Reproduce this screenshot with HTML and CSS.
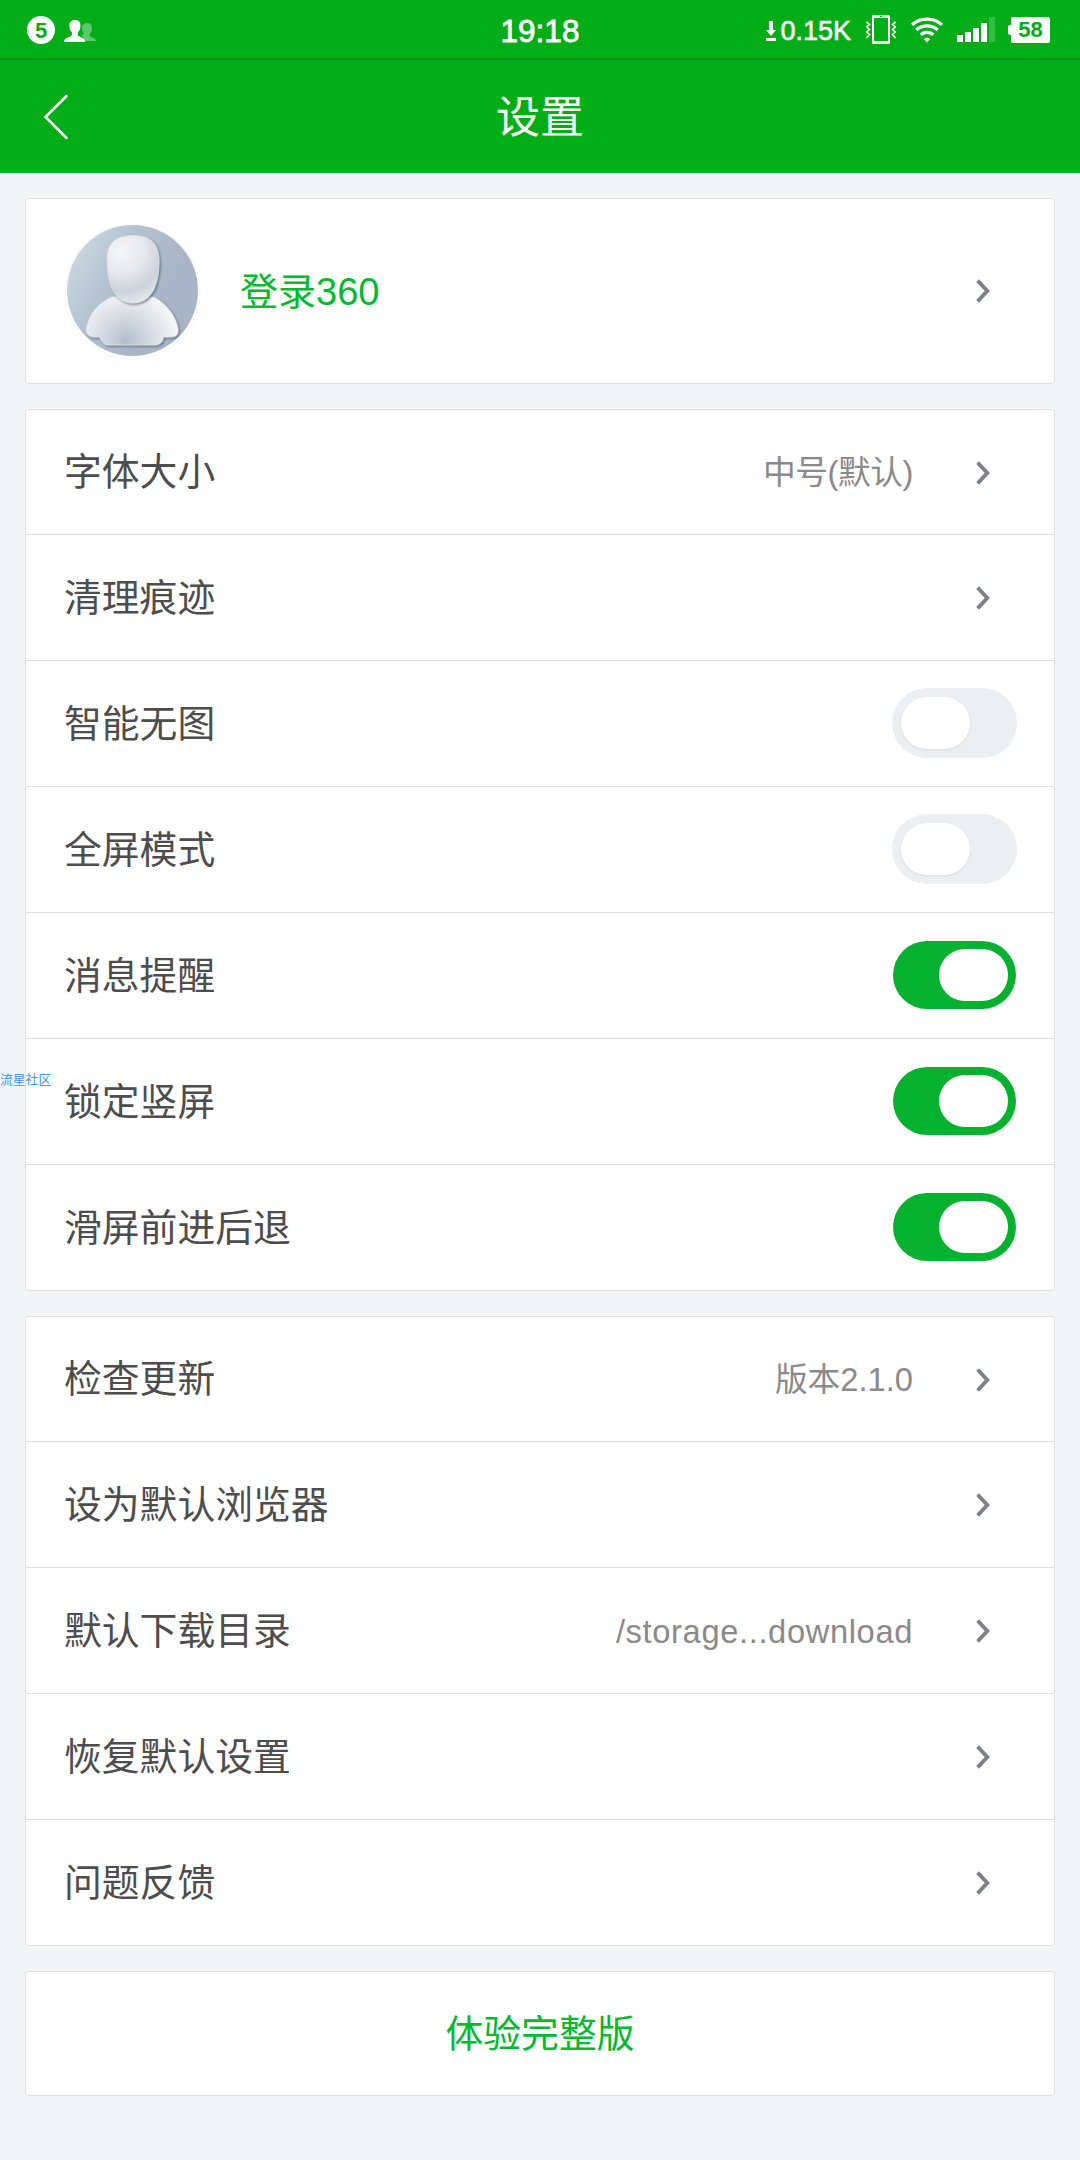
FILE: index.html
```html
<!DOCTYPE html>
<html lang="zh-CN">
<head>
<meta charset="utf-8">
<title>设置</title>
<link rel="stylesheet" href="styles.css">
</head>
<body>
<svg class="defs" width="0" height="0">
  <symbol id="chevron" viewBox="0 0 16 26"><path d="M2.600 2.600 12.300 13 2.600 23.400"/></symbol>
</svg>
<div class="statusbar">
  <div class="status-left">
    <span class="count">5</span>
    <svg class="people" width="33" height="24" viewBox="0 0 33 24" fill="#fff">
      <path opacity=".35" d="M23 3c3.400 0 5 2 5 5 0 2.500-.8 4.500-2.200 6v2c1.500 2 6.200 1.500 6.200 5H22l-2-3-2-2 2-3c-1.500-1-2-3-2-5 0-3 1.600-5 5-5z"/>
      <path d="M11 0c4 0 5.700 2.500 5.500 6-.1 2.800-1 5-2.700 6.500V15c1.500 2.800 7.700 2 7.700 7H0c0-5 6.200-4.200 7.900-7v-2.500C6.300 11 5.500 8.800 5.400 6 5.200 2.500 7 0 11 0z"/>
    </svg>
  </div>
  <div class="clock">19:18</div>
  <div class="status-right">
    <svg class="down" width="10" height="20" viewBox="0 0 10 20" fill="#fff"><path d="M3 0h4v9h3l-5 6-5-6h3zM0 17h10v3H0z"/></svg>
    <span class="speed">0.15K</span>
    <svg class="vibrate" width="30" height="30" viewBox="0 0 30 30" fill="none" stroke="#fff">
      <path stroke-width="2" d="M7 1v27M23 1v27"/><path stroke-width="3" d="M6.500 1.500h17M6.500 27.500h17"/>
      <path stroke="#02ad18" d="M14 1.500h2"/>
      <path stroke-width="1.700" d="M.5 7 3.500 9.500.8 12l2.700 2.500L.8 17l2.700 2.500L.5 23M29.500 7l-3 2.500 2.700 2.500-2.700 2.500 2.700 2.500-2.700 2.500 3 3.500"/>
    </svg>
    <svg class="wifi" width="32" height="26" viewBox="0 0 32 26" fill="none" stroke="#fff" stroke-width="3.300">
      <path d="M1 7.800C9 .2 23 .2 31 7.800"/><path d="M5.300 13c5.500-5.400 15.900-5.400 21.400 0"/><path d="M9.800 17.800c3.200-3.300 9.200-3.300 12.400 0"/>
      <path fill="#fff" stroke="none" d="M12.800 22c1.800-1.800 4.600-1.800 6.400 0L16 25.500z"/>
    </svg>
    <svg class="signal" width="38" height="25" viewBox="0 0 38 25" fill="#fff"><path d="M0 18h6v7H0zM8 15h6v10H8zM16 11h6v14h-6zM24 6h6v19h-6z"/><path opacity=".2" d="M32 0h6v25h-6z"/></svg>
    <span class="battery">58</span>
  </div>
</div>
<header class="titlebar">
  <svg class="back" width="26" height="46" viewBox="0 0 26 46"><path d="M23.500 2 2.500 23l21 21"/></svg>
  <h1>设置</h1>
</header>
<main>
  <section class="card">
    <div class="row account">
      <svg class="avatar" width="137" height="137" viewBox="0 0 137 137">
        <defs>
          <linearGradient id="bg" x1="0" y1=".1" x2=".75" y2=".5"><stop stop-color="#d0dee6"/><stop offset=".5" stop-color="#b5c3d1"/><stop offset="1" stop-color="#a9b5c6"/></linearGradient>
          <radialGradient id="head" gradientUnits="userSpaceOnUse" cx="58" cy="28" r="56"><stop stop-color="#f5f5f6"/><stop offset=".4" stop-color="#e6e9ed"/><stop offset=".72" stop-color="#ccd2da"/><stop offset="1" stop-color="#e9edf2"/></radialGradient>
          <radialGradient id="body" gradientUnits="userSpaceOnUse" cx="62" cy="118" r="52"><stop stop-color="#b3bdca"/><stop offset=".45" stop-color="#d3d9e0"/><stop offset="1" stop-color="#f5f7f9"/></radialGradient>
          <filter id="soft" x="-20%" y="-20%" width="140%" height="140%"><feDropShadow dx="1.300" dy="1.300" stdDeviation="1" flood-color="#43546a" flood-opacity=".7"/></filter>
          <clipPath id="disc"><circle cx="68.500" cy="67.500" r="65.500"/></clipPath>
        </defs>
        <circle cx="68.500" cy="69" r="67.500" fill="#fff" stroke="#f6f6f7"/>
        <g clip-path="url(#disc)">
          <path fill="url(#bg)" d="M0 0h137v137H0z"/>
          <path filter="url(#soft)" fill="url(#body)" stroke="#dce7ee" stroke-width=".8" d="M48 74C34 80 25 91 22.500 105c-.8 5 2 8.500 7 9h5c3 .5 3 8 10 8h45c6 0 9-2 10-8h8c5 0 7-3 6.500-8C112 94 104 82 90 74z"/>
          <path filter="url(#soft)" fill="url(#head)" stroke="#d5e1e9" stroke-width=".8" d="M69 12.500c-17 0-26 7-26 24C43 61 50 80 69 80c18 0 26-17 26-42 0-18-9-25.500-26-25.500z"/>
        </g>
      </svg>
      <span class="login">登录360</span><svg class="chev"><use href="#chevron"/></svg>
    </div>
  </section>
  <section class="card">
    <div class="row"><span class="label">字体大小</span><span class="value size">中号(默认)</span><svg class="chev"><use href="#chevron"/></svg></div>
    <div class="row"><span class="label">清理痕迹</span><svg class="chev"><use href="#chevron"/></svg></div>
    <div class="row"><span class="label">智能无图</span><span class="switch"></span></div>
    <div class="row"><span class="label">全屏模式</span><span class="switch"></span></div>
    <div class="row"><span class="label">消息提醒</span><span class="switch on"></span></div>
    <div class="row"><span class="label">锁定竖屏</span><span class="switch on"></span></div>
    <div class="row"><span class="label">滑屏前进后退</span><span class="switch on"></span></div>
  </section>
  <section class="card">
    <div class="row"><span class="label">检查更新</span><span class="value">版本2.1.0</span><svg class="chev"><use href="#chevron"/></svg></div>
    <div class="row"><span class="label">设为默认浏览器</span><svg class="chev"><use href="#chevron"/></svg></div>
    <div class="row"><span class="label">默认下载目录</span><span class="value path">/storage...download</span><svg class="chev"><use href="#chevron"/></svg></div>
    <div class="row"><span class="label">恢复默认设置</span><svg class="chev"><use href="#chevron"/></svg></div>
    <div class="row"><span class="label">问题反馈</span><svg class="chev"><use href="#chevron"/></svg></div>
  </section>
  <section class="card full-version">体验完整版</section>
</main>
<div class="watermark">流星社区</div>
</body>
</html>
```
FILE: styles.css
```css
* { box-sizing: border-box; }
body {
  margin: 0;
  min-height: 2160px;
  background: #f4f5f7;
  font-family: "Liberation Sans", "Noto Sans CJK SC", sans-serif;
  color: #4d4d4d;
}
.defs { display: block; }
svg { flex: none; }

.statusbar {
  display: grid;
  grid-template-columns: 1fr auto 1fr;
  align-items: start;
  height: 60px;
  background: #02ad18;
  border-bottom: 2px solid #049a18;
  color: #fff;
}
.status-left { display: flex; padding: 16px 0 0 27px; }
.count {
  width: 28px;
  height: 28px;
  border-radius: 50%;
  background: #fff;
  color: #02ad18;
  font: bold 22px/29px "Liberation Sans", sans-serif;
  text-align: center;
}
.people { margin: 4px 0 0 9px; }
.clock {
  padding-top: 13px;
  font-size: 31.500px;
  line-height: 36px;
  -webkit-text-stroke: .8px #fff;
}
.status-right { display: flex; justify-content: flex-end; padding-right: 30px; }
.down { margin-top: 21px; }
.speed {
  margin: 15px 0 0 4px;
  font-size: 27px;
  line-height: 32px;
  -webkit-text-stroke: .6px #fff;
}
.vibrate { margin: 15px 0 0 15px; }
.wifi { margin: 17px 0 0 15px; }
.signal { margin: 17px 0 0 14px; }
.battery {
  position: relative;
  width: 39px;
  height: 26px;
  margin: 17px 0 0 16px;
  border-radius: 2px;
  background: #fff;
  color: #02ad18;
  font: bold 22px/26px "Liberation Sans", sans-serif;
  text-align: center;
}
.battery::before {
  content: "";
  position: absolute;
  left: -3px;
  top: 8px;
  width: 4px;
  height: 10px;
  border-radius: 2px 0 0 2px;
  background: #fff;
}

.titlebar {
  display: grid;
  grid-template-columns: 1fr auto 1fr;
  align-items: center;
  height: 113px;
  background: #02ad18;
}
.back { margin-left: 43px; fill: none; stroke: #fff; stroke-width: 2.600px; stroke-linecap: round; }
h1 {
  margin: 0;
  padding-top: 3px;
  color: #fff;
  font-size: 44px;
  line-height: 60px;
  font-weight: 400;
}

main {
  display: flex;
  flex-direction: column;
  gap: 25px;
  padding: 25px 25px 0;
}
.card {
  border: 1px solid #dcdee0;
  border-radius: 4px;
  background: #fff;
}
.row {
  display: flex;
  align-items: center;
  height: 126px;
  padding: 0 26px 0 38px;
  border-bottom: 1px solid #dcdee0;
}
.row:first-child { height: 125px; }
.row:last-child { height: 125px; border-bottom: 0; }
.row.account { height: 184px; }
.label { flex: 1; font-size: 37.800px; line-height: 54px; }
.value { padding-top: 2px; font-size: 32.700px; line-height: 48px; color: #8a8a8a; }
.value.size { letter-spacing: -.4px; }
.value.path { letter-spacing: .62px; }
.chev {
  width: 16px;
  height: 26px;
  margin: 1px 37px 0 62px;
  fill: none;
  stroke: #7d8084;
  stroke-width: 3.800px;
}
.account .chev { margin-top: 0; }
.login { flex: 1; padding-top: 2px; margin-left: 39px; font-size: 38px; line-height: 54px; color: #02b92f; }

.switch {
  display: flex;
  width: 125px;
  height: 70px;
  margin: 0 11px 2px 0;
  padding: 9px;
  border-radius: 35px;
  background: #ebeff2;
}
.switch::before {
  content: "";
  width: 69px;
  height: 52px;
  border-radius: 26px;
  background: #fff;
  box-shadow: 0 1px 3px rgba(0, 0, 0, .08);
}
.switch.on {
  justify-content: flex-end;
  width: 123px;
  height: 68px;
  margin-right: 12px;
  padding: 8px;
  background: #06b12f;
}
.switch.on::before { box-shadow: none; }
.full-version {
  height: 125px;
  color: #02b92f;
  font-size: 37.800px;
  line-height: 125px;
  text-align: center;
}
.watermark {
  position: absolute;
  left: 0;
  top: 1070px;
  font-size: 12.800px;
  line-height: 20px;
  color: #3f97ee;
}
```
